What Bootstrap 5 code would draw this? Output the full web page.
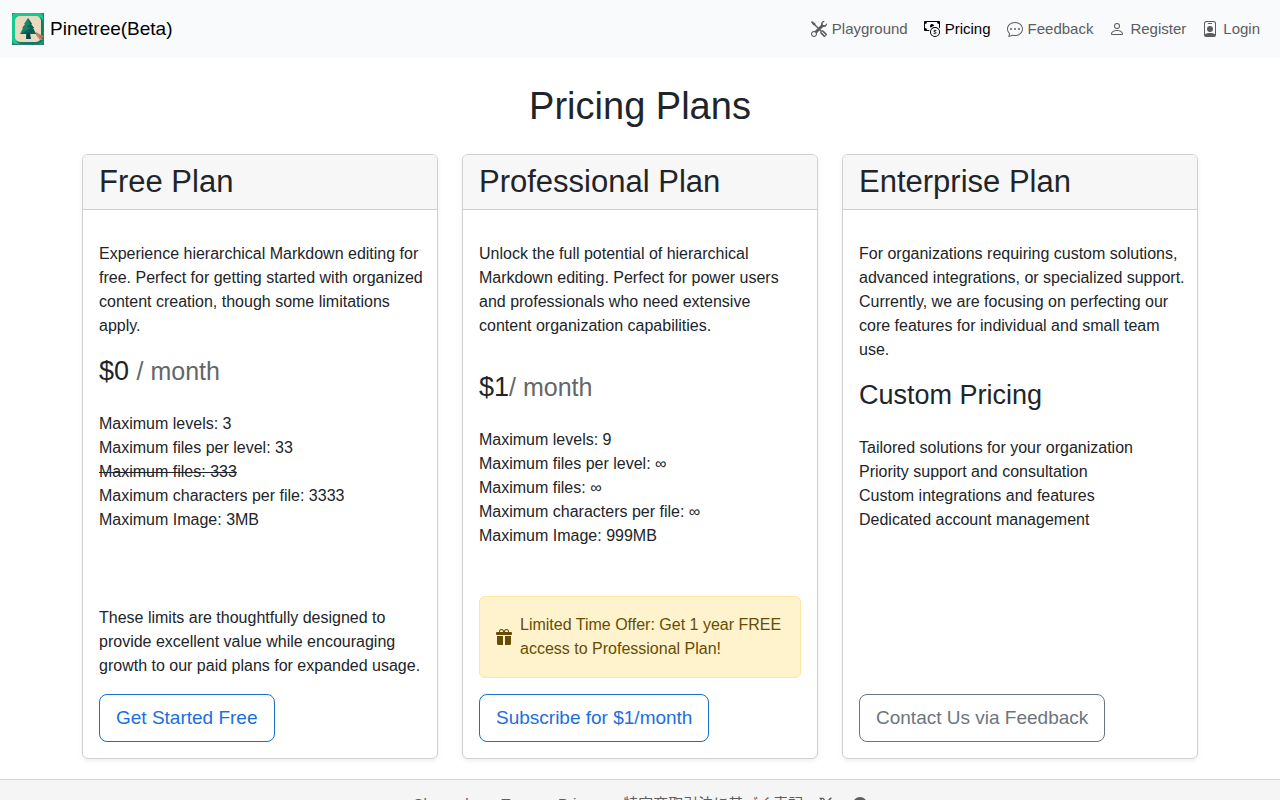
<!DOCTYPE html>
<html lang="en">
<head>
<meta charset="utf-8">
<meta name="viewport" content="width=device-width, initial-scale=1">
<title>Pricing - Pinetree(Beta)</title>
<link rel="stylesheet" href="https://cdn.jsdelivr.net/npm/bootstrap@5.3.0/dist/css/bootstrap.min.css">
<style>
body { font-family: "Liberation Sans", "Noto Sans CJK JP", sans-serif; }
svg { fill: currentColor; flex: none; }
.site-nav { background: #f8fafc; padding: 8px 0; min-height: 58px; }
.site-nav .navbar-brand { font-size: 19px; line-height: 32px; padding: 5px 0; gap: 6px; }
.site-nav .nav-link { display: flex; align-items: center; gap: 5px; font-size: 15px; line-height: 24px; color: #5b5d5f; }
.site-nav .nav-link.active { color: #000; }
.page-title { font-size: 38px; line-height: 48px; margin: 24px 0; }
.card { border-color: #d0d1d2; }
.card-header { background: #f7f7f7; border-color: #d0d1d2; }
.plan-name { font-size: 31px; line-height: 38px; }
.plan-copy { margin: 16px -5px 16px 0; }
.price { font-size: 27px; line-height: 34px; }
.price small { font-size: 25px; line-height: 1; color: #64676a; }
.card .btn { font-size: 19px; line-height: 30px; border-radius: 8px; }
.btn-outline-primary { --bs-btn-color: #1a6fe0; --bs-btn-border-color: #1a6fc8; }
.offer { background: #fff3cd; border-color: #ffe69c; color: #664d03; }
.site-footer { background: #f5f5f5; border-top: 1px solid #d8d8d8; font-size: 15px; line-height: 24px; margin-top: 20px; }
.site-footer a { color: #5f5f5f; text-decoration: none; }
</style>
</head>
<body>
<nav class="navbar navbar-expand-md site-nav">
  <div class="container-fluid">
    <a class="navbar-brand d-flex align-items-center" href="#">
      <svg width="32" height="32" viewBox="0 0 32 32" aria-hidden="true">
        <rect width="32" height="32" fill="#36796b"/>
        <rect width="31" height="31" rx="4" fill="#16c98d"/>
        <rect x="4" y="4" width="27" height="27" rx="5" fill="#087f62"/>
        <rect x="3" y="3" width="26" height="26" rx="5" fill="#ead9bd"/>
        <path d="M16 5l-4 6h1l-3 4h1l-3 6h6v4h4v-4h6l-3-6h1l-3-4h1z" fill="#128666"/>
        <path d="M16 5l4 6h-1l3 4h-1l3 6H9l4-3 6-3-4-1 3-3z" fill="#086052"/>
        <path d="M15 20h3l1 6h-5z" fill="#153e49"/>
        <path d="M24 19l7 4v4h-3l-4-5z" fill="#b98767"/><path d="M27 22l5 4v2z" fill="#705449"/>
      </svg>Pinetree(Beta)
    </a>
    <button class="navbar-toggler" type="button" data-bs-toggle="collapse" data-bs-target="#menu" aria-controls="menu" aria-label="Toggle navigation"><span class="navbar-toggler-icon"></span></button>
    <div class="collapse navbar-collapse" id="menu">
      <ul class="navbar-nav ms-auto">
        <li class="nav-item"><a class="nav-link" href="#"><svg width="16" height="16" viewBox="0 0 16 16"><path d="M1 0 0 1l2.2 3.081a1 1 0 0 0 .815.419h.07a1 1 0 0 1 .708.293l2.675 2.675-2.617 2.654A3.003 3.003 0 0 0 0 13a3 3 0 1 0 5.878-.851l2.654-2.617.968.968-.305.914a1 1 0 0 0 .242 1.023l3.27 3.27a.997.997 0 0 0 1.414 0l1.586-1.586a.997.997 0 0 0 0-1.414l-3.27-3.27a1 1 0 0 0-1.023-.242L10.5 9.5l-.96-.96 2.68-2.643A3.005 3.005 0 0 0 16 3q0-.405-.102-.777l-2.14 2.141L12 4l-.364-1.757L13.777.102a3 3 0 0 0-3.675 3.68L7.462 6.46 4.793 3.793a1 1 0 0 1-.293-.707v-.071a1 1 0 0 0-.419-.814zm9.646 10.646a.5.5 0 0 1 .708 0l2.914 2.915a.5.5 0 0 1-.707.707l-2.915-2.914a.5.5 0 0 1 0-.708M3 11l.471.242.529.026.287.445.445.287.026.529L5 13l-.242.471-.026.529-.445.287-.287.445-.529.026L3 15l-.471-.242L2 14.732l-.287-.445L1.268 14l-.026-.529L1 13l.242-.471.026-.529.445-.287.287-.445.529-.026z"/></svg>Playground</a></li>
        <li class="nav-item"><a class="nav-link active" aria-current="page" href="#"><svg width="16" height="16" viewBox="0 0 16 16"><path fill-rule="evenodd" d="M11 15a4 4 0 1 0 0-8 4 4 0 0 0 0 8m5-4a5 5 0 1 1-10 0 5 5 0 0 1 10 0"/><path d="M9.438 11.944c.047.596.518 1.06 1.363 1.116v.44h.375v-.443c.875-.061 1.386-.529 1.386-1.207 0-.618-.39-.936-1.09-1.1l-.296-.07v-1.2c.376.043.614.248.671.532h.658c-.047-.575-.54-1.024-1.329-1.073V8.5h-.375v.45c-.747.073-1.255.522-1.255 1.158 0 .562.378.92 1.007 1.066l.248.061v1.272c-.384-.058-.639-.27-.696-.563h-.668zm1.36-1.354c-.369-.085-.569-.26-.569-.522 0-.294.216-.514.572-.578v1.1zm.432.746c.449.104.655.272.655.569 0 .339-.257.571-.709.614v-1.195z"/><path d="M1 0a1 1 0 0 0-1 1v8a1 1 0 0 0 1 1h4.083q.088-.517.258-1H3a2 2 0 0 0-2-2V3a2 2 0 0 0 2-2h10a2 2 0 0 0 2 2v3.528c.38.34.717.728 1 1.154V1a1 1 0 0 0-1-1z"/><path d="M9.998 5.083 10 5a2 2 0 1 0-3.132 1.65 6 6 0 0 1 3.13-1.567"/></svg>Pricing</a></li>
        <li class="nav-item"><a class="nav-link" href="#"><svg width="16" height="16" viewBox="0 0 16 16"><path d="M5 8a1 1 0 1 1-2 0 1 1 0 0 1 2 0m4 0a1 1 0 1 1-2 0 1 1 0 0 1 2 0m3 1a1 1 0 1 0 0-2 1 1 0 0 0 0 2"/><path d="m2.165 15.803.02-.004c1.83-.363 2.948-.842 3.468-1.105A9 9 0 0 0 8 15c4.418 0 8-3.134 8-7s-3.582-7-8-7-8 3.134-8 7c0 1.76.743 3.37 1.97 4.6a10.4 10.4 0 0 1-.524 2.318l-.003.011a11 11 0 0 1-.244.637c-.079.186.074.394.273.362a22 22 0 0 0 .693-.125m.8-3.108a1 1 0 0 0-.287-.801C1.618 10.83 1 9.468 1 8c0-3.192 3.004-6 7-6s7 2.808 7 6-3.004 6-7 6a8 8 0 0 1-2.088-.272 1 1 0 0 0-.711.074c-.387.196-1.24.57-2.634.893a11 11 0 0 0 .398-2"/></svg>Feedback</a></li>
        <li class="nav-item"><a class="nav-link" href="#"><svg width="16" height="16" viewBox="0 0 16 16"><path d="M8 8a3 3 0 1 0 0-6 3 3 0 0 0 0 6m2-3a2 2 0 1 1-4 0 2 2 0 0 1 4 0m4 8c0 1-1 1-1 1H3s-1 0-1-1 1-4 6-4 6 3 6 4m-1-.004c-.001-.246-.154-.986-.832-1.664C11.516 10.68 10.289 10 8 10s-3.516.68-4.168 1.332c-.678.678-.83 1.418-.832 1.664z"/></svg>Register</a></li>
        <li class="nav-item"><a class="nav-link" href="#"><svg width="16" height="16" viewBox="0 0 16 16"><path d="M6.5 2a.5.5 0 0 0 0 1h3a.5.5 0 0 0 0-1zM11 8a3 3 0 1 1-6 0 3 3 0 0 1 6 0"/><path d="M4.5 0A2.5 2.5 0 0 0 2 2.5V14a2 2 0 0 0 2 2h8a2 2 0 0 0 2-2V2.5A2.5 2.5 0 0 0 11.5 0zM3 2.5A1.5 1.5 0 0 1 4.5 1h7A1.5 1.5 0 0 1 13 2.5v10.795a4.2 4.2 0 0 0-.776-.492C11.392 12.387 10.063 12 8 12s-3.392.387-4.224.803a4.2 4.2 0 0 0-.776.492z"/></svg>Login</a></li>
      </ul>
    </div>
  </div>
</nav>

<main class="container">
  <h1 class="page-title text-center fw-normal">Pricing Plans</h1>
  <div class="row row-cols-1 row-cols-lg-3 gy-4 gy-lg-0">
    <div class="col">
      <div class="card h-100 shadow-sm">
        <div class="card-header"><h2 class="plan-name fw-normal mb-0">Free Plan</h2></div>
        <div class="card-body d-flex flex-column align-items-start">
          <p class="plan-copy">Experience hierarchical Markdown editing for free. Perfect for getting started with organized content creation, though some limitations apply.</p>
          <h3 class="price fw-normal mb-2">$0 <small>/ month</small></h3>
          <ul class="list-unstyled mt-3 mb-4">
            <li>Maximum levels: 3</li>
            <li>Maximum files per level: 33</li>
            <li><s>Maximum files: 333</s></li>
            <li>Maximum characters per file: 3333</li>
            <li>Maximum Image: 3MB</li>
          </ul>
          <p class="mt-auto mb-3">These limits are thoughtfully designed to provide excellent value while encouraging growth to our paid plans for expanded usage.</p>
          <button type="button" class="btn btn-lg btn-outline-primary">Get Started Free</button>
        </div>
      </div>
    </div>
    <div class="col">
      <div class="card h-100 shadow-sm">
        <div class="card-header"><h2 class="plan-name fw-normal mb-0">Professional Plan</h2></div>
        <div class="card-body d-flex flex-column align-items-start">
          <p class="plan-copy">Unlock the full potential of hierarchical Markdown editing. Perfect for power users and professionals who need extensive content organization capabilities.</p>
          <h3 class="price fw-normal mt-3 mb-2">$1<small>/ month</small></h3>
          <ul class="list-unstyled mt-3 mb-5">
            <li>Maximum levels: 9</li>
            <li>Maximum files per level: ∞</li>
            <li>Maximum files: ∞</li>
            <li>Maximum characters per file: ∞</li>
            <li>Maximum Image: 999MB</li>
          </ul>
          <div class="alert offer d-flex align-items-center gap-2 mt-auto mb-3 w-100" role="alert">
            <svg width="16" height="16" viewBox="0 0 16 16"><path d="M3 2.5a2.5 2.5 0 0 1 5 0 2.5 2.5 0 0 1 5 0v.006c0 .07 0 .27-.038.494H15a1 1 0 0 1 1 1v1a1 1 0 0 1-1 1H1a1 1 0 0 1-1-1V4a1 1 0 0 1 1-1h2.038A3 3 0 0 1 3 2.506zm1.068.5H7v-.5a1.5 1.5 0 1 0-3 0c0 .085.002.274.045.43zM9 3h2.932l.023-.07c.043-.156.045-.345.045-.43a1.5 1.5 0 0 0-3 0zm6 4v7.5a1.5 1.5 0 0 1-1.5 1.5H9V7zM2.5 16A1.5 1.5 0 0 1 1 14.5V7h6v9z"/></svg>
            <div>Limited Time Offer: Get 1 year FREE access to Professional Plan!</div>
          </div>
          <button type="button" class="btn btn-lg btn-outline-primary">Subscribe for $1/month</button>
        </div>
      </div>
    </div>
    <div class="col">
      <div class="card h-100 shadow-sm">
        <div class="card-header"><h2 class="plan-name fw-normal mb-0">Enterprise Plan</h2></div>
        <div class="card-body d-flex flex-column align-items-start">
          <p class="plan-copy">For organizations requiring custom solutions, advanced integrations, or specialized support. Currently, we are focusing on perfecting our core features for individual and small team use.</p>
          <h3 class="price fw-normal mb-2">Custom Pricing</h3>
          <ul class="list-unstyled mt-3 mb-4">
            <li>Tailored solutions for your organization</li>
            <li>Priority support and consultation</li>
            <li>Custom integrations and features</li>
            <li>Dedicated account management</li>
          </ul>
          <button type="button" class="btn btn-lg btn-outline-secondary mt-auto">Contact Us via Feedback</button>
        </div>
      </div>
    </div>
  </div>
</main>

<footer class="site-footer py-2">
  <div class="container d-flex flex-wrap justify-content-center align-items-center gap-3 pt-1">
    <a href="#">Changelog</a>
    <a href="#">Terms</a>
    <a href="#">Privacy</a>
    <a href="#">特定商取引法に基づく表記</a>
    <a href="#" class="d-flex pe-1" aria-label="X"><svg width="14" height="14" viewBox="0 0 16 16"><path d="M12.6.75h2.454l-5.36 6.142L16 15.25h-4.937l-3.867-5.07-4.425 5.07H.316l5.733-6.57L0 .75h5.063l3.495 4.633L12.601.75Zm-.86 13.028h1.36L4.323 2.145H2.865z"/></svg></a>
    <a href="#" class="d-flex" aria-label="GitHub"><svg width="14" height="14" viewBox="0 0 16 16"><path d="M8 0C3.58 0 0 3.58 0 8c0 3.54 2.29 6.53 5.47 7.59.4.07.55-.17.55-.38 0-.19-.01-.82-.01-1.49-2.01.37-2.53-.49-2.69-.94-.09-.23-.48-.94-.82-1.13-.28-.15-.68-.52-.01-.53.63-.01 1.08.58 1.23.82.72 1.21 1.87.87 2.33.66.07-.52.28-.87.51-1.07-1.78-.2-3.64-.89-3.64-3.95 0-.87.31-1.59.82-2.15-.08-.2-.36-1.02.08-2.12 0 0 .67-.21 2.2.82a7.6 7.6 0 0 1 4 0c1.53-1.04 2.2-.82 2.2-.82.44 1.1.16 1.92.08 2.12.51.56.82 1.27.82 2.15 0 3.07-1.87 3.75-3.65 3.95.29.25.54.73.54 1.48 0 1.07-.01 1.93-.01 2.2 0 .21.15.46.55.38A8.01 8.01 0 0 0 16 8c0-4.42-3.58-8-8-8"/></svg></a>
  </div>
</footer>
<script src="https://cdn.jsdelivr.net/npm/bootstrap@5.3.0/dist/js/bootstrap.bundle.min.js"></script>
</body>
</html>
